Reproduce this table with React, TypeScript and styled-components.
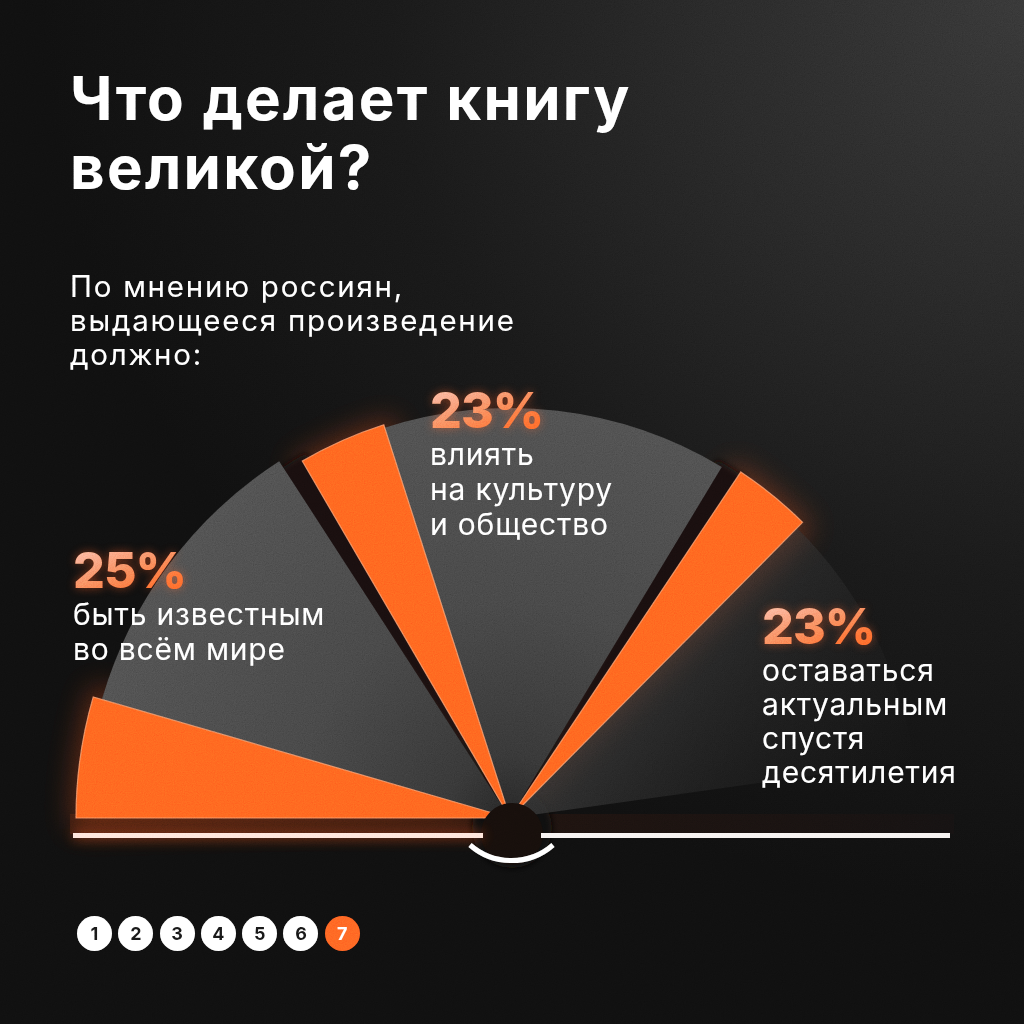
import React from "react";
import styled, { createGlobalStyle } from "styled-components";

const GlobalStyle = createGlobalStyle`
  html, body { margin: 0; padding: 0; background: #0e0e0e; }
  * { box-sizing: border-box; }
`;

const FONT = `Inter, "Noto Sans", "Liberation Sans", sans-serif`;

const Page = styled.div`
  position: relative;
  width: 1024px;
  height: 1024px;
  overflow: hidden;
  font-family: ${FONT};
  color: #fff;
  background:
    radial-gradient(ellipse 980px 900px at 100% 0%, #313131 0%, #232323 35%, #161616 65%, #0e0e0e 100%);
  display: flex;
  flex-direction: column;
`;

const Header = styled.header`
  padding: 64px 0 0 70px;
`;

const Title = styled.h1`
  margin: 0;
  font-size: 60px;
  line-height: 69px;
  font-weight: 700;
  letter-spacing: 2.3px;
`;

const Subtitle = styled.p`
  margin: 67px 0 0;
  font-size: 29.5px;
  line-height: 34px;
  font-weight: 400;
  letter-spacing: 1.75px;
`;

/* chart drawing starts at page y = 371 */
const CHART_TOP = 371;

const Chart = styled.div`
  position: relative;
  width: 1024px;
  height: 510px;
  & > svg {
    display: block;
  }
`;

const Label = styled.div<{ $x: number; $y: number }>`
  position: absolute;
  left: ${(p) => p.$x}px;
  top: ${(p) => p.$y}px;
  display: flex;
  flex-direction: column;
`;

const Percent = styled.span`
  font-size: 50px;
  line-height: 50px;
  font-weight: 800;
  letter-spacing: -1px;
  background: linear-gradient(160deg, #ffbb9d 0%, #f7845f 40%, #ff6630 75%, #ff5a1f 100%);
  -webkit-background-clip: text;
  background-clip: text;
  color: transparent;
  filter: drop-shadow(0 0 5px rgba(255, 95, 35, 0.4));
  align-self: flex-start;
`;

const LabelText = styled.span<{ $lh: number }>`
  margin-top: 2px;
  font-size: 30px;
  line-height: ${(p) => p.$lh}px;
  font-weight: 400;
  letter-spacing: 0.8px;
  white-space: pre-line;
`;

const Pager = styled.nav`
  display: flex;
  gap: 6.3px;
  padding-left: 77px;
  margin-top: 35px;
`;

const Dot = styled.span<{ $active?: boolean }>`
  width: 35px;
  height: 35px;
  border-radius: 50%;
  display: flex;
  align-items: center;
  justify-content: center;
  background: ${(p) => (p.$active ? "#ff5a1f" : "#ffffff")};
  color: ${(p) => (p.$active ? "#ffffff" : "#151515")};
  font-weight: 700;
  font-size: 18px;
`;

const Grain = styled.svg`
  position: absolute;
  inset: 0;
  pointer-events: none;
  mix-blend-mode: overlay;
  opacity: 0.4;
`;

const CX = 510;
const CY = 818;

function sector(r: number, a1: number, a2: number, cx = CX, cy = CY) {
  const rad = (a: number) => (a * Math.PI) / 180;
  const x1 = cx + r * Math.cos(rad(a1));
  const y1 = cy - r * Math.sin(rad(a1));
  const x2 = cx + r * Math.cos(rad(a2));
  const y2 = cy - r * Math.sin(rad(a2));
  const large = a2 - a1 > 180 ? 1 : 0;
  return `M ${cx} ${cy} L ${x1.toFixed(2)} ${y1.toFixed(2)} A ${r} ${r} 0 ${large} 0 ${x2.toFixed(2)} ${y2.toFixed(2)} Z`;
}

const oranges = [
  { r: 434, from: 163.8, to: 180 },
  { r: 413, from: 107.8, to: 120.2 },
  { r: 416, from: 45.3, to: 56.3 },
];

function Fan() {
  return (
    <svg width="1024" height="510" viewBox={`0 ${CHART_TOP} 1024 510`}>
      <defs>
        <radialGradient id="grayFill" gradientUnits="userSpaceOnUse" cx={CX} cy={CY} r="430">
          <stop offset="0" stopColor="#222222" />
          <stop offset="0.15" stopColor="#313131" />
          <stop offset="0.5" stopColor="#3f3f3f" />
          <stop offset="1" stopColor="#484848" />
        </radialGradient>
        <linearGradient id="grayFade" gradientUnits="userSpaceOnUse" x1="600" y1="560" x2="920" y2="760">
          <stop offset="0" stopColor="#3a3a3a" stopOpacity="0.9" />
          <stop offset="0.5" stopColor="#2c2c2c" stopOpacity="0.45" />
          <stop offset="1" stopColor="#202020" stopOpacity="0" />
        </linearGradient>
        <linearGradient id="bandFill" x1="0" y1="0" x2="1" y2="0">
          <stop offset="0" stopColor="#24140e" />
          <stop offset="0.45" stopColor="#1c110d" />
          <stop offset="1" stopColor="#131010" />
        </linearGradient>
        <filter id="glow" x="-30%" y="-30%" width="160%" height="160%">
          <feGaussianBlur stdDeviation="14" />
        </filter>
        <filter id="soft" x="-20%" y="-20%" width="140%" height="140%">
          <feGaussianBlur stdDeviation="3" />
        </filter>
        <filter id="lineGlow" x="-10%" y="-200%" width="120%" height="500%">
          <feGaussianBlur stdDeviation="6" />
        </filter>
      </defs>

      {/* dark band under the fan */}
      <rect x="70" y="814" width="884" height="20" fill="url(#bandFill)" />

      {/* orange glow */}
      <g filter="url(#glow)" opacity="0.28">
        {oranges.map((o, i) => (
          <path key={i} d={sector(o.r + 4, o.from - 1.5, o.to + 1.5)} fill="#ff5a1f" />
        ))}
      </g>

      {/* shadows in the gaps */}
      <g filter="url(#soft)">
        <path d={sector(418, 119.2, 124)} fill="#120b08" />
        <path d={sector(414, 55.2, 60)} fill="#120b08" />
        <circle cx="512" cy="828" r="40" fill="#100a08" />
      </g>

      {/* gray sectors */}
      <path d={sector(425, 122.9, 163.8)} fill="url(#grayFill)" />
      <path d={sector(410, 58.9, 107.8)} fill="url(#grayFill)" />
      <path d={sector(408, 8, 45.3)} fill="url(#grayFade)" />

      {/* orange sectors */}
      {oranges.map((o, i) => (
        <path
          key={i}
          d={sector(o.r, o.from, o.to)}
          fill="#ff5a1c"
          stroke="#ff9a72"
          strokeOpacity="0.7"
          strokeWidth="1.2"
        />
      ))}

      {/* hub */}
      <circle cx="512" cy="834" r="31" fill="#140d0a" />

      {/* base lines */}
      <rect x="73" y="831" width="410" height="9" fill="#ff5a1f" opacity="0.3" filter="url(#lineGlow)" />
      <rect x="73" y="833" width="410" height="5" fill="#ffe2d6" />
      <rect x="541" y="833" width="409" height="5" fill="#f5f1ef" />
      <path d="M 470 845 A 63 63 0 0 0 553 845" fill="none" stroke="#ffffff" strokeWidth="5" />
    </svg>
  );
}

/* label positions in page coordinates */
const labels = [
  { x: 73, y: 545, pct: "25%", text: "быть известным\nво всём мире", lh: 35 },
  { x: 430, y: 385, pct: "23%", text: "влиять\nна культуру\nи общество", lh: 35 },
  { x: 762, y: 601, pct: "23%", text: "оставаться\nактуальным\nспустя\nдесятилетия", lh: 34 },
];

export default function App() {
  return (
    <>
      <GlobalStyle />
      <Page>
        <Header>
          <Title>
            Что делает книгу
            <br />
            великой?
          </Title>
          <Subtitle>
            По мнению россиян,
            <br />
            выдающееся произведение
            <br />
            должно:
          </Subtitle>
        </Header>
        <Chart>
          <Fan />
          {labels.map((l, i) => (
            <Label key={i} $x={l.x} $y={l.y - CHART_TOP}>
              <Percent>{l.pct}</Percent>
              <LabelText $lh={l.lh}>{l.text}</LabelText>
            </Label>
          ))}
        </Chart>
        <Pager>
          {[1, 2, 3, 4, 5, 6, 7].map((n) => (
            <Dot key={n} $active={n === 7}>
              {n}
            </Dot>
          ))}
        </Pager>
        <Grain width="1024" height="1024" viewBox="0 0 1024 1024">
          <filter id="grainNoise">
            <feTurbulence type="fractalNoise" baseFrequency="0.9" numOctaves="2" stitchTiles="stitch" />
            <feColorMatrix
              type="matrix"
              values="0.33 0.33 0.33 0 0  0.33 0.33 0.33 0 0  0.33 0.33 0.33 0 0  0 0 0 0 1"
            />
          </filter>
          <rect width="1024" height="1024" filter="url(#grainNoise)" />
        </Grain>
      </Page>
    </>
  );
}
